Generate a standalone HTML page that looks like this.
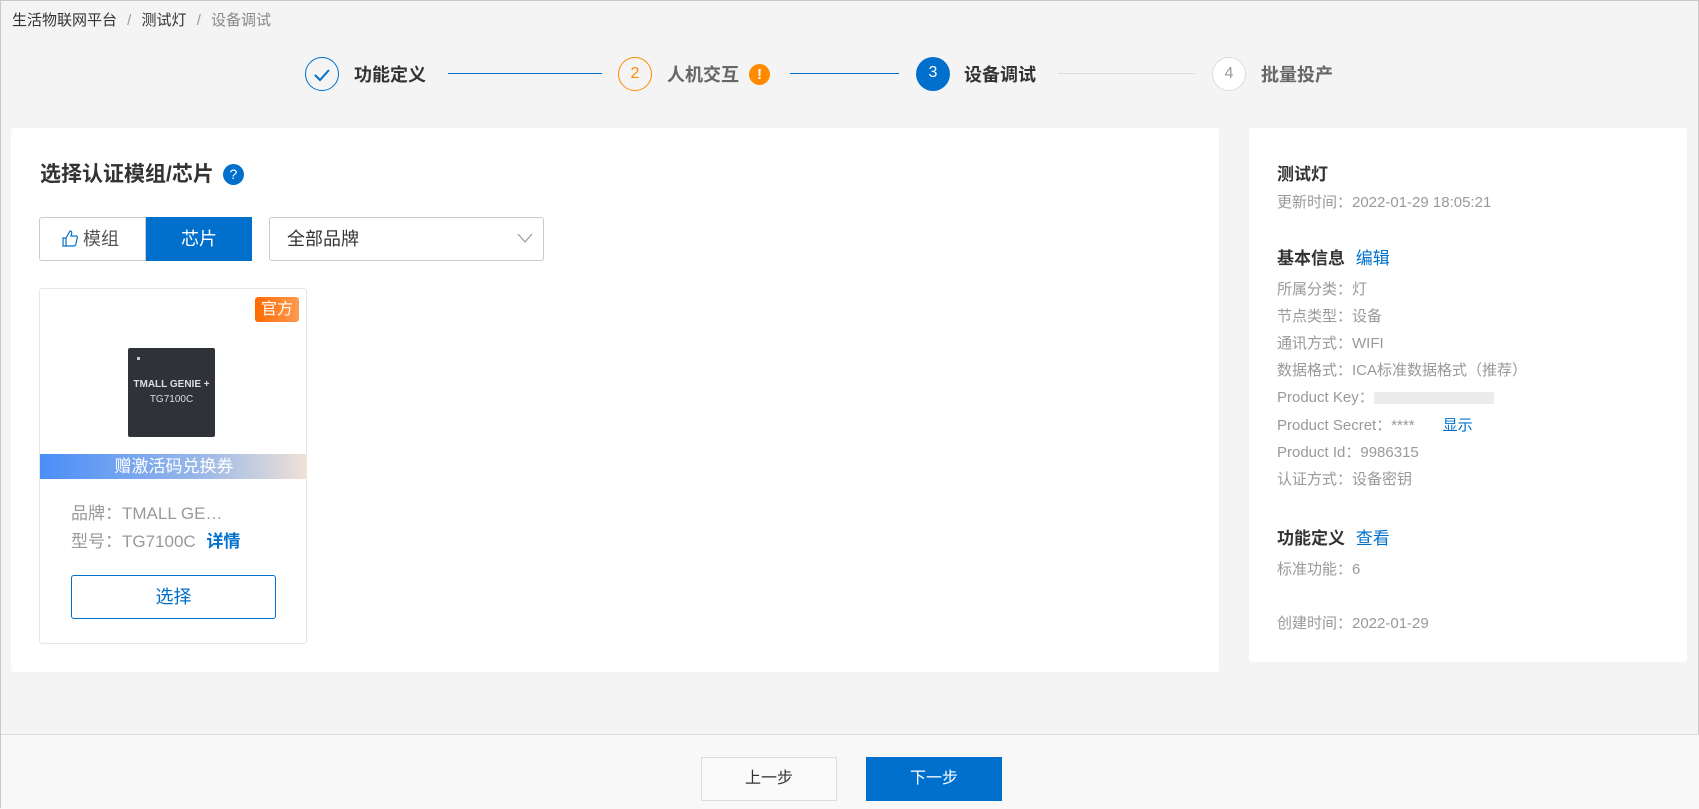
<!DOCTYPE html>
<html><head><meta charset="utf-8"><style>
*{box-sizing:border-box;margin:0;padding:0}
body{width:1699px;height:808px;overflow:hidden;background:#f4f4f4;font-family:"Liberation Sans","Noto Sans CJK SC",sans-serif;position:relative;border:1px solid #c8c8c8;color:#333}
.a{position:absolute;white-space:nowrap}
.circ{position:absolute;width:34px;height:34px;border-radius:50%;text-align:center;line-height:32px;font-size:16px}
.st{font-size:18px;font-weight:bold;top:60px}
.ln{position:absolute;height:1px;top:72px}
.card{position:absolute;background:#fff;border-radius:3px}
.r{position:absolute;left:28px;font-size:15px;color:#999;white-space:nowrap}
.r b{color:#333}
.lk{color:#0070cc}
</style></head><body>
<div class="a" style="left:11px;top:8px;font-size:15px;color:#333">生活物联网平台 <span style="color:#999;margin:0 6px">/</span> 测试灯 <span style="color:#999;margin:0 6px">/</span> <span style="color:#888">设备调试</span></div>

<div class="circ" style="left:304px;top:56px;border:1px solid #0070cc;color:#0070cc"><svg width="18" height="14" viewBox="0 0 18 14" style="margin-top:10px"><path d="M2 7l5 5 9-10" fill="none" stroke="#0070cc" stroke-width="2"/></svg></div>
<div class="a st" style="left:353px">功能定义</div>
<div class="ln" style="left:447px;width:154px;background:#0070cc"></div>
<div class="circ" style="left:617px;top:56px;border:1px solid #ff8a00;color:#ff8a00">2</div>
<div class="a st" style="left:666px;color:#666">人机交互</div>
<div class="a" style="left:748px;top:63px;width:21px;height:21px;border-radius:50%;background:#ff8a00;color:#fff;font-weight:bold;font-size:15px;text-align:center;line-height:21px">!</div>
<div class="ln" style="left:789px;width:109px;background:#0070cc"></div>
<div class="circ" style="left:915px;top:56px;background:#0070cc;color:#fff">3</div>
<div class="a st" style="left:963px">设备调试</div>
<div class="ln" style="left:1057px;width:137px;background:#ddd"></div>
<div class="circ" style="left:1211px;top:56px;border:1px solid #ddd;color:#999;background:#fff">4</div>
<div class="a st" style="left:1260px;color:#666">批量投产</div>

<div class="card" style="left:10px;top:127px;width:1208px;height:544px">
 <div class="a" style="left:29px;top:30px;font-size:21px;font-weight:bold">选择认证模组/芯片<span style="display:inline-block;margin-left:9px;width:21px;height:21px;border-radius:50%;background:#0070cc;color:#fff;font-size:14px;font-weight:normal;text-align:center;line-height:21px;vertical-align:2px">?</span></div>
 <div class="a" style="left:28px;top:89px;width:107px;height:44px;border:1px solid #ccc;border-radius:3px 0 0 3px;font-size:18px;color:#555;line-height:42px;padding-left:22px"><svg width="16" height="17" viewBox="0 0 16 17" style="vertical-align:-2px"><path d="M1 8h3v8H1zM4 8l4-7c1.5 0 2 1 1.6 2.5L9 6h5c1 0 1.6 1 1.3 2l-1.6 6.5c-.3 1-1 1.5-2 1.5H4" fill="none" stroke="#0070cc" stroke-width="1.2"/></svg> 模组</div>
 <div class="a" style="left:135px;top:89px;width:106px;height:44px;background:#0070cc;color:#fff;font-size:18px;line-height:44px;text-align:center">芯片</div>
 <div class="a" style="left:258px;top:89px;width:275px;height:44px;border:1px solid #ccc;border-radius:3px;font-size:18px;line-height:42px;padding-left:17px">全部品牌<svg style="position:absolute;right:10px;top:15px" width="16" height="10"><path d="M1 1l7 8 7-8" fill="none" stroke="#999" stroke-width="1.2"/></svg></div>
 <div class="a" style="left:28px;top:160px;width:268px;height:356px;border:1px solid #e6e6e6;border-radius:3px;overflow:hidden">
  <div class="a" style="left:215px;top:8px;width:44px;height:25px;background:linear-gradient(90deg,#ff6a00,#ff9a50);color:#fff;border-radius:3px;font-size:16px;text-align:center;line-height:25px">官方</div>
  <div class="a" style="left:88px;top:59px;width:87px;height:89px;background:#30323a;border-radius:2px;color:#ddd;font-size:10px;text-align:center;font-weight:bold">
   <div style="position:absolute;left:9px;top:9px;width:3px;height:3px;background:#ccc"></div>
   <div style="margin-top:31px">TMALL GENIE +</div><div style="margin-top:4px;font-weight:normal">TG7100C</div></div>
  <div class="a" style="left:0;top:165px;width:268px;height:25px;background:linear-gradient(90deg,#4a8ef7,#9ab8e8 60%,#f0e2d6);color:#fff;font-size:17px;text-align:center;line-height:25px">赠激活码兑换券</div>
  <div class="a" style="left:31px;top:210px;font-size:17px;color:#999">品牌：TMALL GE…</div>
  <div class="a" style="left:31px;top:238px;font-size:17px;color:#999">型号：TG7100C <b style="color:#0070cc;margin-left:6px">详情</b></div>
  <div class="a" style="left:31px;top:286px;width:205px;height:44px;border:1px solid #0070cc;border-radius:3px;color:#0070cc;font-size:18px;text-align:center;line-height:42px">选择</div>
 </div>
</div>

<div class="card" style="left:1248px;top:127px;width:438px;height:534px">
 <div class="r" style="top:32px;font-size:17px"><b>测试灯</b></div>
 <div class="r" style="top:63px">更新时间：2022-01-29 18:05:21</div>
 <div class="r" style="top:116px;font-size:17px"><b>基本信息</b> <span class="lk" style="margin-left:6px">编辑</span></div>
 <div class="r" style="top:150px">所属分类：灯</div>
 <div class="r" style="top:177px">节点类型：设备</div>
 <div class="r" style="top:204px">通讯方式：WIFI</div>
 <div class="r" style="top:231px">数据格式：ICA标准数据格式（推荐）</div>
 <div class="r" style="top:258px">Product Key：<span style="display:inline-block;width:120px;height:12px;background:#ececec;vertical-align:middle"></span></div>
 <div class="r" style="top:286px">Product Secret：****<span class="lk" style="margin-left:28px">显示</span></div>
 <div class="r" style="top:313px">Product Id：9986315</div>
 <div class="r" style="top:340px">认证方式：设备密钥</div>
 <div class="r" style="top:396px;font-size:17px"><b>功能定义</b> <span class="lk" style="margin-left:6px">查看</span></div>
 <div class="r" style="top:430px">标准功能：6</div>
 <div class="r" style="top:484px">创建时间：2022-01-29</div>
</div>

<div class="a" style="left:0;top:733px;width:1699px;height:75px;background:#f8f8f8;border-top:1px solid #ddd"></div>
<div class="a" style="left:700px;top:756px;width:136px;height:44px;border:1px solid #ddd;background:#fafafa;font-size:16px;text-align:center;line-height:42px">上一步</div>
<div class="a" style="left:865px;top:756px;width:136px;height:44px;background:#0070cc;color:#fff;font-size:16px;text-align:center;line-height:44px">下一步</div>
</body></html>
